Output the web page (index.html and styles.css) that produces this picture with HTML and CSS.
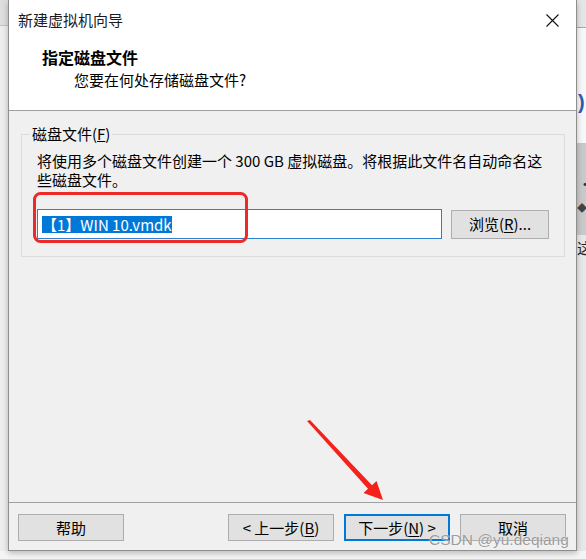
FILE: index.html
```html
<!DOCTYPE html>
<html lang="zh-CN">
<head>
<meta charset="utf-8">
<title>新建虚拟机向导</title>
<link rel="stylesheet" href="styles.css">
</head>
<body>
<div class="desk-left"></div>
<div class="window">
  <div class="titlebar">
    <span class="title">新建虚拟机向导</span>
    <span class="close">
      <svg width="13" height="13" viewBox="0 0 13 13"><path d="M0.5 0.5 L12.5 12.5 M12.5 0.5 L0.5 12.5" stroke="#111" stroke-width="1.1" fill="none"/></svg>
    </span>
  </div>
  <div class="header">
    <div class="h-title">指定磁盘文件</div>
    <div class="h-sub">您要在何处存储磁盘文件?</div>
  </div>
  <div class="content">
    <div class="group">
      <span class="legend">磁盘文件(<u>F</u>)</span>
      <div class="desc">
        <span class="line">将使用多个磁盘文件创建一个 300 GB 虚拟磁盘。将根据此文件名自动命名这</span>
        <span class="line">些磁盘文件。</span>
      </div>
      <div class="file-row">
        <div class="input"><span class="sel">【1】WIN 10.vmdk</span></div>
        <button class="btn browse">浏览(<u>R</u>)...</button>
      </div>
    </div>
  </div>
  <div class="footer">
    <button class="btn">帮助</button>
    <div class="spacer"></div>
    <button class="btn">&lt; 上一步(<u>B</u>)</button>
    <button class="btn primary">下一步(<u>N</u>) &gt;</button>
    <button class="btn">取消</button>
  </div>
</div>
<div class="desk-right">
  <span class="glyph-a">)</span>
  <span class="glyph-b">•</span>
  <span class="glyph-c">◆</span>
  <span class="glyph-d">这</span>
</div>
<svg class="annot" width="586" height="559" viewBox="0 0 586 559">
  <rect x="34.5" y="193.5" width="212" height="48" rx="6" ry="6" fill="none" stroke="#ee2a28" stroke-width="3"/>
  <polygon points="307,421 310,420 372,485.3 376.5,481 383,500 363.5,493 368,488.7" fill="#f5221b"/>
</svg>
<div class="watermark">CSDN @yu.deqiang</div>
</body>
</html>
```
FILE: styles.css
```css
* { box-sizing: border-box; }
html, body { margin: 0; padding: 0; }
body {
  width: 586px;
  height: 559px;
  overflow: hidden;
  position: relative;
  display: flex;
  align-items: flex-start;
  background: #f4f4f4;
  font-family: "Noto Sans CJK SC", "Noto Sans", sans-serif;
  font-size: 15px;
  color: #000;
}
.desk-left {
  width: 8px;
  height: 559px;
  flex: none;
  background: linear-gradient(to bottom, #dedede 0 25px, #c4c4c4 25px 26px, #eeeeee 26px 551px, #f5f5f5 551px);
}
.window {
  width: 569px;
  height: 551px;
  flex: none;
  display: flex;
  flex-direction: column;
  background: #f0f0f0;
  border-left: 1px solid #8e8e8e;
  border-right: 1px solid #8e8e8e;
  border-bottom: 1px solid #8e8e8e;
  box-shadow: 0 2px 6px rgba(0,0,0,0.25);
  position: relative;
  z-index: 1;
}
.titlebar {
  height: 40px;
  flex: none;
  background: #fff;
  display: flex;
  align-items: center;
  justify-content: space-between;
  padding-left: 9px;
  padding-right: 17px;
}
.title {
  font-size: 15px;
  line-height: 20px;
  color: #1a1a1a;
}
.close { display: flex; align-items: center; width: 13px; height: 13px; }
.close svg { display: block; }
.header {
  height: 71px;
  flex: none;
  background: #fff;
  border-bottom: 1px solid #a0a0a0;
  padding-top: 7px;
  padding-left: 33px;
}
.h-title {
  font-size: 16px;
  font-weight: bold;
  line-height: 20px;
}
.h-sub {
  margin-top: 3px;
  margin-left: 32px;
  font-size: 15px;
  line-height: 20px;
}
.content {
  flex: 1;
  padding: 23px 11px 0 12px;
  border-bottom: 1px solid #a0a0a0;
}
.group {
  position: relative;
  border: 1px solid #dcdcdc;
  padding: 16px 15px 17px 15px;
}
.legend {
  position: absolute;
  top: -11px;
  left: 8px;
  padding: 0 2px;
  background: #f0f0f0;
  line-height: 20px;
  font-size: 15px;
}
.desc { line-height: 19px; font-size: 15px; }
.line { display: block; white-space: nowrap; }
.file-row {
  margin-top: 20px;
  display: flex;
  align-items: center;
  gap: 9px;
}
.input {
  width: 405px;
  height: 30px;
  border: 1px solid #2f7fd0;
  background: #fff;
  padding-left: 4px;
  display: flex;
  align-items: center;
}
.sel {
  background: #0078d7;
  color: #fff;
  line-height: 17px;
  height: 17px;
  font-size: 15px;
  white-space: nowrap;
}
.btn {
  font-family: "Noto Sans CJK SC", "Noto Sans", sans-serif;
  font-size: 15px;
  line-height: 18px;
  color: #000;
  background: #e1e1e1;
  border: 1px solid #adadad;
  width: 106px;
  height: 27px;
  padding: 0;
  margin: 0;
  white-space: nowrap;
}
.btn u { text-underline-offset: 2px; }
.browse { width: 98px; height: 29px; }
.primary { border: 2px solid #0078d7; }
.footer {
  height: 47px;
  flex: none;
  display: flex;
  align-items: flex-start;
  gap: 10px;
  padding: 11px 10px 0 9px;
}
.spacer { flex: 1; }
.desk-right {
  flex: 1;
  height: 559px;
  position: relative;
  overflow: hidden;
  background: linear-gradient(to bottom, #e6e6e6 0 27px, #8fb0d0 27px 28px, #f8f8f8 28px 143px, #c9c9c9 143px 235px, #e8e8e8 235px 551px, #f5f5f5 551px);
}
.desk-right span { position: absolute; line-height: 1; }
.glyph-a { left: 1px; top: 92px; color: #2a5db0; font-size: 20px; font-family: "Liberation Sans", sans-serif; font-weight: bold; }
.glyph-b { left: 1px; top: 176px; color: #333; font-size: 14px; }
.glyph-c { left: 0px; top: 203px; color: #444; font-size: 10px; }
.glyph-d { left: 0px; top: 240px; color: #222; font-size: 15px; }
.annot {
  position: absolute;
  left: 0;
  top: 0;
  z-index: 5;
  pointer-events: none;
}
.watermark {
  position: absolute;
  left: 429px;
  top: 530px;
  z-index: 6;
  font-family: "Liberation Sans", sans-serif;
  font-size: 15.5px;
  line-height: 20px;
  color: rgba(130,130,130,0.8);
  text-shadow: 0 0 1px #fff;
  white-space: nowrap;
}
```
